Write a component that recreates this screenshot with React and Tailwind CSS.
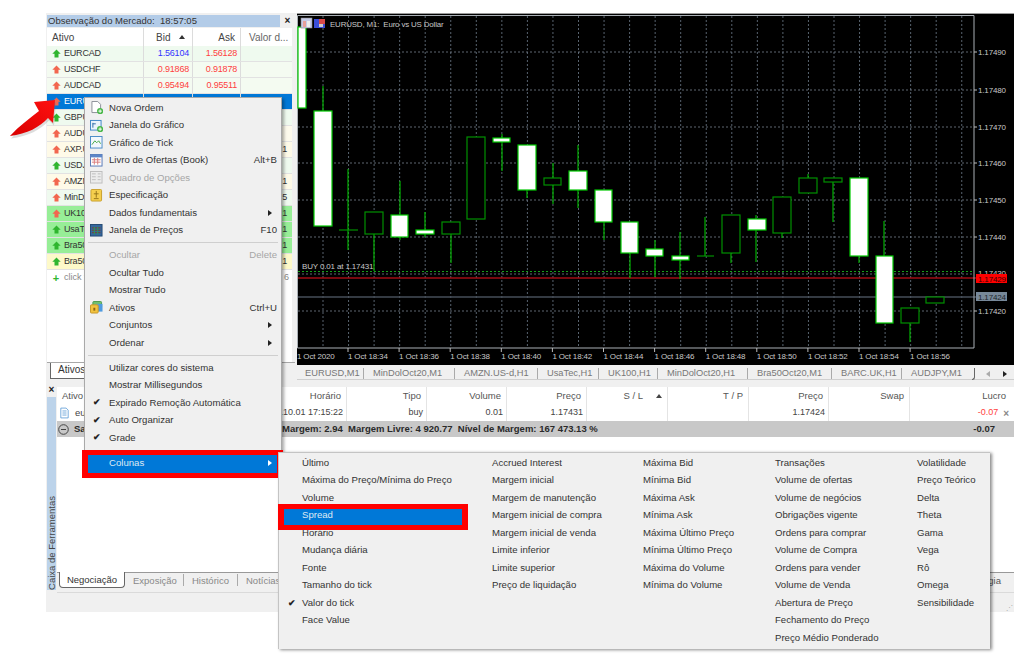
import React from "react";

const rows = [
  ["EURCAD","1.56104","1.56128","","g","bg-[#effaef]","text-[#3434ff]"],
  ["USDCHF","0.91868","0.91878","","r","bg-[#f4fbf1]","text-[#ff4040]"],
  ["AUDCAD","0.95494","0.95511","","r","bg-[#f4fbf1]","text-[#ff4040]"],
  ["EURUSD","","","","r","bg-[#0078d7]",""],
  ["GBPUSD","","","","g","bg-[#effaef]",""],
  ["AUDUSD","","","","r","bg-[#fdfaec]",""],
  ["AXP.US","","","1","r","bg-[#fefae8]",""],
  ["USDJPY","","","","g","bg-[#effaef]",""],
  ["AMZN.US-d","","","1","r","bg-[#fefae8]",""],
  ["MinDolOct20","","","5","r","bg-[#effaef]",""],
  ["UK100","","","1","r","bg-[#97ee97]",""],
  ["UsaTec","","","1","g","bg-[#97ee97]",""],
  ["Bra50Oct20","","","1","g","bg-[#97ee97]",""],
  ["Bra50Nov20","","","1","g","bg-[#fdf9c9]",""],
];

function Arrow({ kind }) {
  return (
    <svg width="9" height="9" viewBox="0 0 9 9" className="shrink-0">
      <path d="M4.5 0.5 L8.7 4.7 L6.5 4.7 L6.5 8.5 L2.5 8.5 L2.5 4.7 L0.3 4.7 Z" fill={kind === "g" ? "#2fb52f" : "#f2664f"} />
    </svg>
  );
}

function Market() {
  return (
    <div className="w-[249px] shrink-0 h-full flex flex-col bg-[#f0f0f0] pl-px">
      <div className="h-[14px] flex items-center mt-px shrink-0">
        <div className="w-[233px] h-[12px] bg-[#b3cce8] text-[9.5px] leading-[12px] text-[#333] pl-px whitespace-nowrap">Observação do Mercado:&nbsp; 18:57:05</div>
        <div className="flex-1 text-center text-[10px] leading-[12px] font-bold text-[#222]">×</div>
      </div>
      <div className="flex-1 bg-white flex flex-col w-[245px] overflow-hidden">
        <div className="h-[18px] grid grid-cols-[97px_49px_48px_49px] text-[10px] text-[#444] shrink-0">
          <div className="pl-[5px] border-r border-[#dcdcdc] flex items-center">Ativo</div>
          <div className="border-r border-[#dcdcdc] flex items-center gap-[9px] pl-[12px]"><span>Bid</span><span className="w-0 h-0 border-x-[3px] border-x-transparent border-b-[4px] border-b-[#333]"></span></div>
          <div className="pr-[5px] border-r border-[#dcdcdc] flex items-center justify-end">Ask</div>
          <div className="pl-[8px] flex items-center whitespace-nowrap text-[#666]">Valor d...</div>
        </div>
        {rows.map((r) => (
          <div key={r[0]} className={`h-[16px] grid grid-cols-[97px_49px_48px_49px] text-[9px] tracking-[-0.2px] border-b border-[#e2e2e2] ${r[5]}`}>
            <div className={`flex items-center gap-[3px] pl-[3px] border-r border-[#dcdcdc] ${r[0] === "EURUSD" ? "text-white" : "text-[#333]"}`}><span className="w-[10px] flex justify-center ml-[1px]"><Arrow kind={r[4]} /></span>{r[0]}</div>
            <div className={`flex items-center justify-end pr-[3px] border-r border-[#dcdcdc] ${r[6]}`}>{r[1]}</div>
            <div className="flex items-center justify-end pr-[3px] border-r border-[#dcdcdc] text-[#ff4040]">{r[2]}</div>
            <div className="flex items-center justify-end pr-[3px] text-[#333]">{r[3]}</div>
          </div>
        ))}
        <div className="h-[16px] flex items-center gap-[3px] pl-[4px] text-[9px] text-[#888]"><span className="w-[10px] text-center text-[#2fb52f] font-bold text-[11px] leading-none">+</span>click to add...<span className="ml-auto pr-[3px]">6</span></div>
        <div className="flex-1"></div>
      </div>
      <div className="h-[18px] flex shrink-0 items-start pl-[3px] border-t border-[#a8a8a8]">
        <div className="h-[16px] w-[70px] bg-white border-l border-b border-[#666] pl-[7px] text-[10px] text-[#333] leading-[14px]">Ativos</div>
      </div>
    </div>
  );
}

const candles = [
  [298,306,27,108,1,302,27,108],
  [314,332,111,226,1,323,86,226],
  [339,358,230,230,0,348,169,250],
  [365,383,212,234,0,374,212,271],
  [391,408,215,237,1,400,181,240],
  [416,434,230,234,1,425,212,237],
  [442,460,222,234,0,451,222,263],
  [467,485,137,219,0,476,137,219],
  [493,510,138,142,1,502,134,171],
  [518,536,145,190,1,527,145,198],
  [544,561,178,185,0,553,163,204],
  [569,587,171,190,1,578,145,208],
  [595,612,190,222,1,604,190,240],
  [621,638,222,253,1,630,222,278],
  [646,663,249,256,1,655,240,277],
  [672,689,256,260,1,680,232,279],
  [697,714,256,256,0,705,217,256],
  [722,740,215,253,0,731,215,263],
  [748,766,219,230,1,756,215,262],
  [773,791,197,233,0,782,197,238],
  [799,817,178,193,0,808,174,193],
  [824,842,178,182,0,833,178,222],
  [850,868,178,256,1,859,178,263],
  [876,893,256,323,1,884,221,323],
  [901,919,308,323,0,910,308,342],
  [926,944,297,303,0,935,297,303],
];
const hLines = [[52,"1.17490"],[90,"1.17480"],[127,"1.17470"],[163,"1.17460"],[200,"1.17450"],[237,"1.17440"],[274,"1.17430"],[311,"1.17420"]];
const vLines = Array.from({ length: 26 }, (_, i) => 323 + i * 25.55);
const times = ["18:34","18:36","18:38","18:40","18:42","18:44","18:46","18:48","18:50","18:52","18:54","18:56"];

function Chart() {
  return (
    <svg viewBox="297 14 717 351" className="block w-[717px] h-[351px] bg-black shrink-0">
      <g fontFamily="'Liberation Sans', sans-serif" fontSize="8" fill="#c8c8c8" letterSpacing="-0.15">
        {vLines.map((x) => <line key={x} x1={x} x2={x} y1="16" y2="348" stroke="#6f7c8b" strokeWidth="0.8" strokeDasharray="2 2" />)}
        {hLines.map(([y]) => <line key={y} x1="298" x2="974" y1={y} y2={y} stroke="#76818d" strokeWidth="0.8" strokeDasharray="2 2" />)}
        <line x1="298" x2="974" y1="271.5" y2="271.5" stroke="#16a016" strokeWidth="1" strokeDasharray="2 2" />
        <line x1="298" x2="976" y1="278" y2="278" stroke="#a00d14" strokeWidth="1.4" />
        <line x1="298" x2="976" y1="297" y2="297" stroke="#464e58" strokeWidth="1.4" />
        <path d="M297.5 348 V15.5 H974 V348 Z" fill="none" stroke="#aab0b6" strokeWidth="1" />
        {candles.map((c) => (
          <g key={c[0]}>
            <line x1={c[5]} x2={c[5]} y1={c[6]} y2={c[7]} stroke="#00b000" strokeWidth="1.2" />
            {c[2] === c[3]
              ? <line x1={c[0]} x2={c[1]} y1={c[2]} y2={c[2]} stroke="#009000" strokeWidth="1.2" />
              : <rect x={c[0]} y={c[2]} width={c[1] - c[0]} height={c[3] - c[2]} fill={c[4] ? "#fff" : "#000"} stroke={c[4] ? "#00c800" : "#009000"} strokeWidth="1.2" />}
          </g>
        ))}
        <rect x="301" y="18" width="11" height="10" fill="#c6cce8" stroke="#888" strokeWidth="0.6" />
        <rect x="303" y="21" width="3" height="6" fill="#e8a09a" />
        <rect x="307" y="21" width="3" height="6" fill="#eee" />
        <rect x="314" y="19" width="11" height="9" fill="#3a4ed8" />
        <rect x="319" y="19" width="6" height="5" fill="#d84a4a" />
        <rect x="319" y="24" width="4" height="3" fill="#ccc" />
        <text x="330" y="27" fontSize="7.9">EURUSD, M1:&#160; Euro vs US Dollar</text>
        <text x="302" y="269">BUY 0.01 at 1.17431</text>
        {hLines.filter(([y]) => y !== 274).map(([y, t]) => (
          <g key={t}>
            <line x1="974" x2="977" y1={y} y2={y} stroke="#bbb" />
            <text x="978" y={y + 3}>{t}</text>
          </g>
        ))}
        <text x="978" y="276">1.17430</text>
        <rect x="976" y="274" width="31" height="9" fill="#ff0000" />
        <text x="978" y="282" fill="#3a0000">1.17429</text>
        <rect x="976" y="292" width="31" height="9" fill="#778899" />
        <text x="978" y="300" fill="#20262c">1.17424</text>
        <text x="297" y="359">1 Oct 2020</text>
        {times.map((t, i) => (
          <g key={t}>
            <line x1={348 + i * 51.1} x2={348 + i * 51.1} y1="348" y2="352" stroke="#bbb" />
            <text x={348 + i * 51.1} y="359">{`1 Oct ${t}`}</text>
          </g>
        ))}
      </g>
    </svg>
  );
}

const chartTabs = [
  ["EURUSD,M1",59],["MinDolOct20,M1",91],["AMZN.US-d,H1",83],["UsaTec,H1",61],["UK100,H1",59],
  ["MinDolOct20,H1",90],["Bra50Oct20,M1",84],["BARC.UK,H1",70],["AUDJPY,M1",70],
];

function ChartTabs() {
  return (
    <div className="h-[15px] bg-[#f0f0f0] flex items-center pl-[8px] pt-[3px] text-[9.3px] text-[#777] border-b border-[#cfcfcf] shrink-0">
      {chartTabs.map(([t, w], i) => (
        <div key={t} className={`h-[11px] flex items-center whitespace-nowrap overflow-hidden ${i === 0 ? "" : "pl-[9px]"} ${i === 8 ? "" : "border-r border-[#aaa]"}`} style={{ width: w }}>{t}</div>
      ))}
      <div className="w-[3px] h-[12px] border-r border-b border-[#666] rounded-br-sm"></div>
      <div className="ml-auto flex items-center gap-[13px] pr-[7px]">
        <span className="w-0 h-0 border-y-[3px] border-y-transparent border-r-[4px] border-r-[#aaa]"></span>
        <span className="w-0 h-0 border-y-[3px] border-y-transparent border-l-[4px] border-l-[#222]"></span>
      </div>
    </div>
  );
}

const cols = "grid grid-cols-[143px_147px_80px_80px_80px_81px_81px_80px_81px_1fr]";
const headCell = "flex items-center justify-end pr-[5px] border-r border-[#e4e4e4] text-[#555]";
const valCell = "flex items-center justify-end pr-[3px] border-r border-[#e4e4e4]";

function Toolbox() {
  return (
    <div className="flex flex-1 bg-[#f0f0f0]">
      <div className="w-[11px] shrink-0 flex flex-col items-center">
        <div className="h-[9px] mt-[5px] mb-[3px] text-[10px] leading-[9px] font-bold text-[#222]">×</div>
        <div className="w-[9px] h-[193px] bg-[#bcd3ea] flex items-end justify-center overflow-hidden">
          <span className="[writing-mode:vertical-rl] rotate-180 text-[9.5px] leading-[9px] text-[#444] whitespace-nowrap">Caixa de Ferramentas</span>
        </div>
      </div>
      <div className="flex-1 flex flex-col min-w-0">
        <div className="h-[7px] shrink-0"></div>
        <div className="h-[203px] bg-white flex flex-col text-[9.5px]">
          <div className={`h-[18px] ${cols}`}>
            <div className={`${headCell} !justify-start pl-[5px]`}>Ativo</div>
            <div className={headCell}>Horário</div>
            <div className={headCell}>Tipo</div>
            <div className={headCell}>Volume</div>
            <div className={headCell}>Preço</div>
            <div className={`${headCell} gap-[13px]`}>S / L<span className="w-0 h-0 border-x-[3px] border-x-transparent border-b-[4px] border-b-[#444]"></span></div>
            <div className={headCell}>T / P</div>
            <div className={headCell}>Preço</div>
            <div className={headCell}>Swap</div>
            <div className="flex items-center justify-end pr-[8px] text-[#555]">Lucro</div>
          </div>
          <div className={`h-[16px] ${cols} text-[#444] text-[9px]`}>
            <div className="flex items-center gap-[6px] pl-[3px] border-r border-[#e4e4e4] text-[9.5px]">
              <svg width="9" height="12" viewBox="0 0 11 13"><path d="M1 .5H7.5L10 3V12.5H1Z" fill="#fff" stroke="#5b9bd5" /><path d="M3 4H8M3 6.5H8M3 9H8" stroke="#5b9bd5" /></svg>
              eurusd
            </div>
            <div className={valCell}>2020.10.01 17:15:22</div>
            <div className={valCell}>buy</div>
            <div className={valCell}>0.01</div>
            <div className={valCell}>1.17431</div>
            <div className="border-r border-[#e4e4e4]"></div>
            <div className="border-r border-[#e4e4e4]"></div>
            <div className={valCell}>1.17424</div>
            <div className="border-r border-[#e4e4e4]"></div>
            <div className="flex items-center justify-end gap-[5px] pr-[5px] text-[#ff4040]">-0.07<span className="text-[#888] font-bold text-[10px]">×</span></div>
          </div>
          <div className="h-[16px] bg-[#c8c8c8] flex items-center font-bold text-[#2a2a2a] whitespace-nowrap">
            <div className="w-[17px] flex justify-start pl-px">
              <svg width="11" height="11" viewBox="0 0 11 11"><circle cx="5.5" cy="5.5" r="4.8" fill="none" stroke="#444" /><path d="M3 5.5H8" stroke="#444" /></svg>
            </div>
            <div className="w-[208px] overflow-hidden">Saldo: 4 923.71 USD</div>
            <div>Margem: 2.94&nbsp; Margem Livre: 4 920.77&nbsp; Nível de Margem: 167 473.13 %</div>
            <div className="ml-auto pr-[19px]">-0.07</div>
          </div>
          <div className="flex-1"></div>
          <div className="h-[18px] shrink-0 flex items-start pl-[2px] bg-[#f0f0f0] border-t border-[#999] text-[9.5px] text-[#888] whitespace-nowrap">
            <div className="w-[66px] h-[16px] -mt-px bg-white border-x border-b border-[#666] text-[#333] font-medium text-center leading-[16px] rounded-b-sm">Negociação</div>
            <div className="w-[58px] pl-[8px] leading-[15px]"><span>Exposição</span></div>
            <div className="w-[54px] pl-[8px] leading-[13px] border-l border-[#aaa] h-[12px] mt-[1px]"><span>Histórico</span></div>
            <div className="pl-[8px] leading-[13px] border-l border-[#aaa] h-[12px] mt-[1px]">Notícias</div>
            <div className="ml-auto pr-[13px] leading-[15px] text-[#555]">Estratégia</div>
          </div>
        </div>
        <div className="h-[2px] shrink-0"></div>
        <div className="h-[19px] shrink-0 border-t border-[#dadada] flex items-end justify-end pr-px">
          <span className="text-[7px] leading-[7px] text-[#aaa]">⋰</span>
        </div>
      </div>
    </div>
  );
}

function MIcon({ name }) {
  const plus = <g><circle cx="10.5" cy="10.5" r="3.2" fill="#49b749" /><path d="M8.7 10.5H12.3M10.5 8.7V12.3" stroke="#fff" strokeWidth="1" /></g>;
  const map = {
    doc: <g><path d="M2 .5H8L11 3.5V12H2Z" fill="#fff" stroke="#8a8f96" />{plus}</g>,
    chart: <g><rect x=".5" y="1.5" width="11" height="10" fill="#eaf3fb" stroke="#3f87c7" /><path d="M3 4V9M6 5H3" stroke="#2b6aa8" />{plus}</g>,
    tick: <g><rect x=".5" y=".5" width="12" height="12" fill="#f4f8fc" stroke="#4a8bc7" /><path d="M2 9 L5 5 L7 7 L9 5 L11 8" fill="none" stroke="#43a843" /></g>,
    book: <g><rect x=".5" y=".5" width="12" height="12" fill="#fff" stroke="#5577b5" /><rect x=".5" y=".5" width="12" height="3" fill="#5d86c8" /><path d="M2 6H11M2 8.5H11M4.5 4V11M8 4V11" stroke="#d87d7d" /></g>,
    opt: <g><rect x=".5" y=".5" width="12" height="12" fill="#ececec" stroke="#bdbdbd" /><path d="M2 3H6M2 6H6M2 9H6M8 3H11M8 6H11M8 9H11" stroke="#bdbdbd" /></g>,
    spec: <g><rect x="1" y=".5" width="11" height="12" rx="1" fill="#f5cf4e" stroke="#c9a02c" /><path d="M6.5 2V9M4 5H9M4 10H9" stroke="#97751a" /></g>,
    price: <g><rect x=".5" y=".5" width="12" height="12" fill="#34679e" stroke="#244a73" /><path d="M2 4H11M2 6.5H11M2 9H11" stroke="#79432f" /><path d="M4.5 3V11M8 3V11" stroke="#2b9a57" /></g>,
    lock: <g><rect x="3" y=".5" width="9" height="7" rx="1" fill="#6fbf6f" stroke="#4d9a4d" /><rect x="6" y="3" width="7" height="8" fill="#4f9be0" /><rect x=".5" y="4" width="8" height="8.5" rx="1" fill="#f2c33f" stroke="#c7962a" /><rect x="3.5" y="7" width="2" height="3" fill="#8a6414" /></g>,
  };
  return <svg width="13" height="13" viewBox="0 0 13.5 13.5" className="absolute left-[5px] top-[2px]">{map[name]}</svg>;
}

function Item({ text, icon, right, sub, check, dim }) {
  return (
    <div className={`relative h-[17.5px] flex items-center pl-[24px] pr-[4px] whitespace-nowrap ${dim ? "text-[#a6a6a6]" : "text-[#333]"}`}>
      {icon && <MIcon name={icon} />}
      {check && <span className="absolute left-[8px] text-[9px] leading-none font-bold text-[#222]">✔</span>}
      {text}
      {right && <span className="ml-auto">{right}</span>}
      {sub && <span className="ml-auto mr-[5px] w-0 h-0 border-y-[3px] border-y-transparent border-l-[4px] border-l-[#222]"></span>}
    </div>
  );
}
const Sep = () => <div className="h-[7.5px] flex items-center px-[3px]"><div className="h-px w-full bg-[#cfcfcf]"></div></div>;

function ContextMenu() {
  return (
    <div className="absolute left-[84px] top-[97px] w-[198px] h-[377px] pt-px bg-[#f0f0f0] border border-[#a9a9a9] shadow-[2px_2px_3px_rgba(0,0,0,0.35)] text-[9.6px]">
      <Item text="Nova Ordem" icon="doc" />
      <Item text="Janela do Gráfico" icon="chart" />
      <Item text="Gráfico de Tick" icon="tick" />
      <Item text="Livro de Ofertas (Book)" icon="book" right="Alt+B" />
      <Item text="Quadro de Opções" icon="opt" dim />
      <Item text="Especificação" icon="spec" />
      <Item text="Dados fundamentais" sub />
      <Item text="Janela de Preços" icon="price" right="F10" />
      <Sep />
      <Item text="Ocultar" right="Delete" dim />
      <Item text="Ocultar Tudo" />
      <Item text="Mostrar Tudo" />
      <Item text="Ativos" icon="lock" right="Ctrl+U" />
      <Item text="Conjuntos" sub />
      <Item text="Ordenar" sub />
      <Sep />
      <Item text="Utilizar cores do sistema" />
      <Item text="Mostrar Millisegundos" />
      <Item text="Expirado Remoção Automática" check />
      <Item text="Auto Organizar" check />
      <Item text="Grade" check />
      <div className="h-[7.5px]"></div>
      <div className="relative h-[17.5px] flex items-center pl-[24px] pr-[4px] text-[#dfe9f3]">
        <div className="absolute -left-[3px] -right-[2px] -top-[4px] -bottom-[6px] border-y-[5px] border-x-[6px] border-[#ff0000] bg-[#0078d7]"></div>
        <span className="relative">Colunas</span>
        <span className="relative ml-auto mr-[5px] w-0 h-0 border-y-[3px] border-y-transparent border-l-[4px] border-l-white"></span>
      </div>
    </div>
  );
}

const colMenu = [
  [190, ["Último","Máxima do Preço/Mínima do Preço","Volume","Spread","Horário","Mudança diária","Fonte","Tamanho do tick","Valor do tick","Face Value"]],
  [151, ["Accrued Interest","Margem inicial","Margem de manutenção","Margem inicial de compra","Margem inicial de venda","Limite inferior","Limite superior","Preço de liquidação"]],
  [132, ["Máxima Bid","Mínima Bid","Máxima Ask","Mínima Ask","Máxima Último Preço","Mínima Último Preço","Máxima do Volume","Mínima do Volume"]],
  [142, ["Transações","Volume de ofertas","Volume de negócios","Obrigações vigente","Ordens para comprar","Volume de Compra","Ordens para vender","Volume de Venda","Abertura de Preço","Fechamento do Preço","Preço Médio Ponderado"]],
  [73, ["Volatilidade","Preço Teórico","Delta","Theta","Gama","Vega","Rô","Omega","Sensibilidade"]],
];

function ColumnsMenu() {
  return (
    <div className="absolute left-[278px] top-[452px] w-[712px] h-[197px] pl-[23px] pt-[1.25px] flex bg-[#f0f0f0] border-l border-t border-[#c4c4c4] shadow-[2px_1px_3px_rgba(0,0,0,0.45)] text-[9.6px] text-[#333]">
      {colMenu.map(([w, list], ci) => (
        <div key={ci} className="shrink-0" style={{ width: w }}>
          {list.map((t) => t === "Spread" ? (
            <div key={t} className="relative h-[17.5px] flex items-center text-[#dfe9f3]">
              <div className="absolute -left-[24px] w-[190px] -top-[3px] h-[26px] border-y-[5px] border-x-[6px] border-[#ff0000] bg-[#0078d7] z-10"></div>
              <span className="relative z-20">{t}</span>
            </div>
          ) : (
            <div key={t} className="relative h-[17.5px] flex items-center whitespace-nowrap">
              {t === "Valor do tick" && <span className="absolute -left-[14px] text-[9px] font-bold text-[#222] leading-none">✔</span>}
              {t}
            </div>
          ))}
        </div>
      ))}
    </div>
  );
}

function RedArrow() {
  return (
    <svg width="60" height="50" viewBox="0 0 60 50" className="absolute left-[6px] top-[95px]">
      <defs>
        <linearGradient id="ra" x1="0" y1="1" x2="1" y2="0">
          <stop offset="0" stopColor="#d80000" />
          <stop offset="1" stopColor="#ff1010" />
        </linearGradient>
      </defs>
      <path d="M4 42 C13 32 24 24 34 17 L28 8 L49 6 L47 29 L42 24 C34 33 21 40 4 42 Z" fill="#777" opacity=".25" transform="translate(1 1.5)" />
      <path d="M4 41 C13 31 24 23 33 16 L28 7 L49 5 L47 28 L42 23 C34 32 21 39 4 41 Z" fill="url(#ra)" />
    </svg>
  );
}

export default function App() {
  return (
    <div className="relative w-[1024px] h-[659px] bg-white overflow-hidden font-['Liberation_Sans',Arial,sans-serif]">
      <div className="ml-[46px] pt-[13px] w-[968px] h-[612px] flex flex-col">
        <div className="flex h-[367px] bg-[#f0f0f0] shrink-0">
          <Market />
          <div className="flex-1 flex flex-col min-w-0 pl-[2px]">
            <div className="h-px shrink-0 bg-[#9a9a9a]"></div>
            <Chart />
            <ChartTabs />
          </div>
        </div>
        <Toolbox />
      </div>
      <RedArrow />
      <ContextMenu />
      <ColumnsMenu />
    </div>
  );
}
